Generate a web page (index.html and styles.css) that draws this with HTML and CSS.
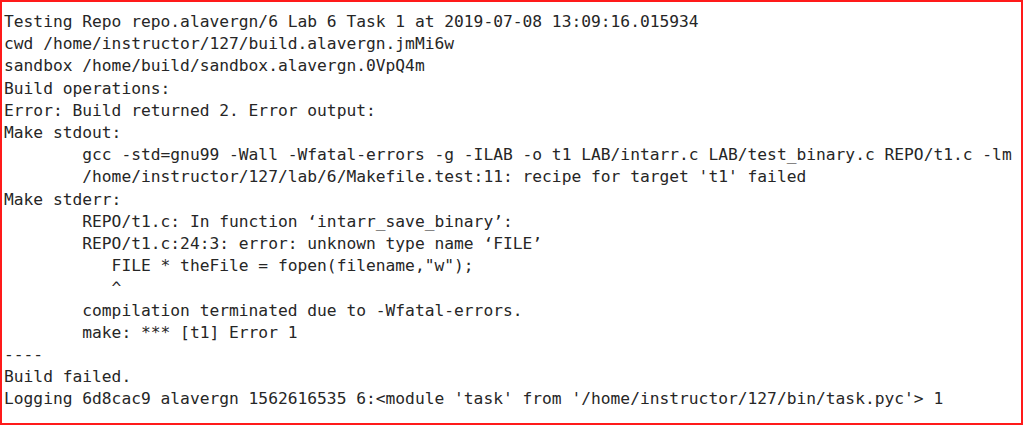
FILE: index.html
```html
<!DOCTYPE html>
<html>
<head>
<meta charset="utf-8">
<link rel="stylesheet" href="styles.css">
</head>
<body>
<div class="frame">
<pre class="log">Testing Repo repo.alavergn/6 Lab 6 Task 1 at 2019-07-08 13:09:16.015934
cwd /home/instructor/127/build.alavergn.jmMi6w
sandbox /home/build/sandbox.alavergn.0VpQ4m
Build operations:
Error: Build returned 2. Error output:
Make stdout:
        gcc -std=gnu99 -Wall -Wfatal-errors -g -ILAB -o t1 LAB/intarr.c LAB/test_binary.c REPO/t1.c -lm
        /home/instructor/127/lab/6/Makefile.test:11: recipe for target 't1' failed
Make stderr:
        REPO/t1.c: In function ‘intarr_save_binary’:
        REPO/t1.c:24:3: error: unknown type name ‘FILE’
           FILE * theFile = fopen(filename,"w");
           ^
        compilation terminated due to -Wfatal-errors.
        make: *** [t1] Error 1
----
Build failed.
Logging 6d8cac9 alavergn 1562616535 6:&lt;module 'task' from '/home/instructor/127/bin/task.pyc'&gt; 1</pre>
</div>
</body>
</html>
```
FILE: styles.css
```css
html, body {
  margin: 0;
  padding: 0;
  background: #ffffff;
}
.frame {
  box-sizing: border-box;
  width: 1023px;
  height: 425px;
  border: 2px solid #ff1a1a;
  border-right-width: 2px;
  padding: 9px 0 0 2px;
  overflow: hidden;
}
.log {
  margin: 0;
  font-family: "DejaVu Sans Mono", "Liberation Mono", monospace;
  font-size: 16.25px;
  line-height: 22.2px;
  color: #262626;
  white-space: pre;
}
```
